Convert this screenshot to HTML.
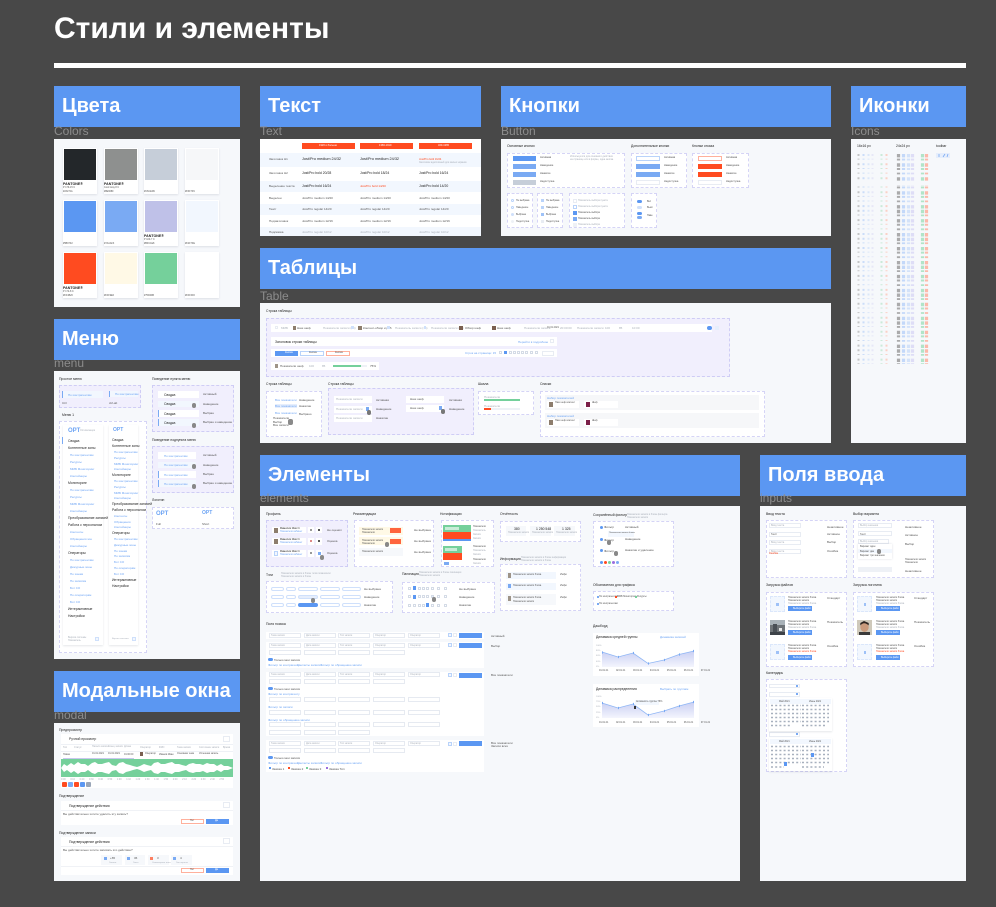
<!DOCTYPE html>
<html lang="ru"><head><meta charset="utf-8"><title>Стили и элементы</title>
<style>
*{box-sizing:border-box}
html,body{margin:0;padding:0;width:996px;height:907px;overflow:hidden;background:#484848}
body{position:relative;font-family:"Liberation Sans","Noto Sans CJK SC",sans-serif}
i,u,h1,h2,p,em,svg{position:absolute;display:block;margin:0;padding:0;font-style:normal;text-decoration:none}
#m{position:absolute;left:0;top:0;width:996px;height:907px;filter:blur(.35px)}
h1{left:54px;top:11px;font-size:30px;line-height:36px;font-weight:700;color:#fff;white-space:nowrap}
h2{height:41px;background:#5b97f2;color:#fff;font-size:20px;line-height:41px;font-weight:700;padding-left:8px;white-space:nowrap}
p{font-size:12px;line-height:14px;color:#8c8c8c;white-space:nowrap}
.pn{background:#f6f8fb}
u{font-size:3px;line-height:4px;color:#555;white-space:nowrap}
u.k{color:#222;font-size:3.4px}
u.h{color:#333;font-size:4px;line-height:5px}
u.bl{color:#6da4f4}
u.gr{color:#aab0ba}
u.rd{color:#ff4b20}
.w{background:#fff}
.lav{background:#f1effd;border:1px dashed #cfcdf5}
.dw{background:#fff;border:1px dashed #d5d4f6}
.card{background:#fff;box-shadow:0 1px 2px rgba(40,50,80,.12)}
.sw{width:32px;height:31px;left:1px;top:1px}
.bb{background:#5b97f2}.bl2{background:#7aaaf3}.gy{background:#c6ced9}.re{background:#ff4b20}
.ow{background:#fff;border:1px solid #b9d3fa}.or{background:#fff;border:1px solid #ffb09c}.op{background:#fff;border:1px solid #e8ecf3}
.tg{height:4px;border:1px solid #cfe0fb;border-radius:2px;background:#fff}
.f{height:5px;width:32px;background:#fff;border:1px solid #e6eaf1}
.pg{width:3px;height:3px;background:#fff;border:.5px solid #d4dbe6}
.nb{width:1px;background:#7aaaf3}
.pal{background:#f2f7fe}
.ph{background:#f2f7fe;border:1px dashed #dbe7fb}
</style></head><body>

<h1>Стили и элементы</h1>
<i style="left:54px;top:63px;width:912px;height:5px;background:#fff"></i>

<h2 style="left:54px;top:86px;width:186px">Цвета</h2><p style="left:54px;top:124px">Colors</p>
<h2 style="left:260px;top:86px;width:221px">Текст</h2><p style="left:260px;top:124px">Text</p>
<h2 style="left:501px;top:86px;width:330px">Кнопки</h2><p style="left:501px;top:124px">Button</p>
<h2 style="left:851px;top:86px;width:115px">Иконки</h2><p style="left:851px;top:124px">Icons</p>
<h2 style="left:260px;top:248px;width:571px">Таблицы</h2><p style="left:260px;top:289px">Table</p>
<h2 style="left:54px;top:319px;width:186px">Меню</h2><p style="left:54px;top:356px">menu</p>
<h2 style="left:260px;top:455px;width:480px">Элементы</h2><p style="left:260px;top:491px">elements</p>
<h2 style="left:760px;top:455px;width:206px">Поля ввода</h2><p style="left:760px;top:491px">inputs</p>
<h2 style="left:54px;top:671px;width:186px">Модальные окна</h2><p style="left:54px;top:708px">modal</p>

<div id="m">
<!-- ЦВЕТА -->
<i class="pn" style="left:54px;top:139px;width:186px;height:168px"></i>
<i class="card" style="left:63px;top:148px;width:34px;height:46px"><i class="sw" style="background:#23272a"></i></i>
<i class="card" style="left:104px;top:148px;width:34px;height:46px"><i class="sw" style="background:#8e908f"></i></i>
<i class="card" style="left:144px;top:148px;width:34px;height:46px"><i class="sw" style="background:#c6ced9"></i></i>
<i class="card" style="left:185px;top:148px;width:34px;height:46px"><i class="sw" style="background:#f6f7f9"></i></i>
<i class="card" style="left:63px;top:200px;width:34px;height:46px"><i class="sw" style="background:#5b97f2"></i></i>
<i class="card" style="left:104px;top:200px;width:34px;height:46px"><i class="sw" style="background:#7aaaf3"></i></i>
<i class="card" style="left:144px;top:200px;width:34px;height:46px"><i class="sw" style="background:#bfc1e8"></i></i>
<i class="card" style="left:185px;top:200px;width:34px;height:46px"><i class="sw" style="background:#f2f7fe"></i></i>
<i class="card" style="left:63px;top:252px;width:34px;height:46px"><i class="sw" style="background:#ff4b20"></i></i>
<i class="card" style="left:104px;top:252px;width:34px;height:46px"><i class="sw" style="background:#fff9e6"></i></i>
<i class="card" style="left:144px;top:252px;width:34px;height:46px"><i class="sw" style="background:#75d09b"></i></i>
<i class="card" style="left:185px;top:252px;width:34px;height:46px"><i class="sw" style="background:#fff"></i></i>
<u class="k" style="left:63px;top:182px;font-weight:700;font-size:3.6px">PANTONE®</u><u style="left:63px;top:186px;font-size:2.4px">P 179-15 C</u><u style="left:63px;top:190px;font-size:2.4px">#23272A</u>
<u class="k" style="left:104px;top:182px;font-weight:700;font-size:3.6px">PANTONE®</u><u style="left:104px;top:186px;font-size:2.4px">Cool Gray 8 C</u><u style="left:104px;top:190px;font-size:2.4px">#8E908F</u>
<u style="left:144px;top:190px;font-size:2.4px">#C6CED9</u><u style="left:185px;top:190px;font-size:2.4px">#F6F7F9</u>
<u style="left:63px;top:242px;font-size:2.4px">#5B97F2</u><u style="left:104px;top:242px;font-size:2.4px">#7AAAF3</u>
<u class="k" style="left:144px;top:234px;font-weight:700;font-size:3.6px">PANTONE®</u><u style="left:144px;top:238px;font-size:2.4px">P 100-7 C</u><u style="left:144px;top:242px;font-size:2.4px">#BFC1E8</u>
<u style="left:185px;top:242px;font-size:2.4px">#F2F7FE</u>
<u class="k" style="left:63px;top:286px;font-weight:700;font-size:3.6px">PANTONE®</u><u style="left:63px;top:290px;font-size:2.4px">P 172-8 C</u><u style="left:63px;top:294px;font-size:2.4px">#FF4B20</u>
<u style="left:104px;top:294px;font-size:2.4px">#FFF9E6</u><u style="left:144px;top:294px;font-size:2.4px">#75D09B</u><u style="left:185px;top:294px;font-size:2.4px">#FFFFFF</u>

<!-- ТЕКСТ -->
<i class="w" style="left:260px;top:139px;width:221px;height:97px"></i>
<i class="re" style="left:302px;top:143px;width:53px;height:6px"></i><i class="re" style="left:360px;top:143px;width:53px;height:6px"></i><i class="re" style="left:419px;top:143px;width:53px;height:6px"></i>
<u style="left:319px;top:144px;color:#fff;font-size:2.6px">1920 и больше</u><u style="left:379px;top:144px;color:#fff;font-size:2.6px">1366-1919</u><u style="left:438px;top:144px;color:#fff;font-size:2.6px">320-1365</u>
<i class="pal" style="left:260px;top:153px;width:221px;height:14px"></i>
<i class="pal" style="left:260px;top:181px;width:221px;height:11px"></i>
<i class="pal" style="left:260px;top:204px;width:221px;height:11px"></i>
<i class="pal" style="left:260px;top:227px;width:221px;height:9px"></i>
<u style="left:269px;top:157px">Заголовок H1</u><u class="k" style="left:302px;top:157px;font-size:3.8px">Jost/Pro medium 24/32</u><u class="k" style="left:360px;top:157px;font-size:3.8px">Jost/Pro medium 24/32</u><u class="rd" style="left:419px;top:158px;font-size:2.6px">Jost/Pro bold 16/24</u><u class="gr" style="left:419px;top:161px;font-size:2.4px">Заголовок адаптивный для малых экранов</u>
<u style="left:269px;top:171px">Заголовок H2</u><u class="k" style="left:302px;top:171px">Jost/Pro bold 20/28</u><u class="k" style="left:360px;top:171px">Jost/Pro bold 18/24</u><u class="k" style="left:419px;top:171px">Jost/Pro bold 16/24</u>
<u style="left:269px;top:184px">Выделение текста</u><u class="k" style="left:302px;top:184px">Jost/Pro bold 16/24</u><u class="rd" style="left:360px;top:184px">Jost/Pro bold 14/20</u><u class="k" style="left:419px;top:184px">Jost/Pro bold 14/20</u>
<u style="left:269px;top:196px">Выделен</u><u style="left:302px;top:196px">Jost/Pro medium 14/20</u><u style="left:360px;top:196px">Jost/Pro medium 14/20</u><u style="left:419px;top:196px">Jost/Pro medium 14/20</u>
<u style="left:269px;top:207px">Текст</u><u style="left:302px;top:207px">Jost/Pro regular 14/20</u><u style="left:360px;top:207px">Jost/Pro regular 14/20</u><u style="left:419px;top:207px">Jost/Pro regular 14/20</u>
<u style="left:269px;top:219px">Подзаголовок</u><u style="left:302px;top:219px">Jost/Pro medium 12/16</u><u style="left:360px;top:219px">Jost/Pro medium 12/16</u><u style="left:419px;top:219px">Jost/Pro medium 12/16</u>
<u style="left:269px;top:230px">Подсказка</u><u class="gr" style="left:302px;top:230px">Jost/Pro regular 10/12</u><u class="gr" style="left:360px;top:230px">Jost/Pro regular 10/12</u><u class="gr" style="left:419px;top:230px">Jost/Pro regular 10/12</u>

<!-- КНОПКИ -->
<i class="pn" style="left:501px;top:139px;width:330px;height:97px"></i>
<u class="k" style="left:507px;top:144px">Основные кнопки</u><u class="k" style="left:631px;top:144px">Дополнительные кнопки</u><u class="k" style="left:692px;top:144px">Кнопки отказа</u>
<i class="dw" style="left:507px;top:153px;width:118px;height:35px"></i>
<i class="dw" style="left:631px;top:153px;width:56px;height:35px"></i>
<i class="dw" style="left:692px;top:153px;width:57px;height:35px"></i>
<i class="bb" style="left:513px;top:156px;width:23px;height:5px"></i><i class="bl2" style="left:513px;top:164px;width:23px;height:5px"></i><i class="bl2" style="left:513px;top:172px;width:23px;height:5px"></i><i class="gy" style="left:513px;top:180px;width:23px;height:5px"></i>
<u style="left:540px;top:156px;font-size:2.6px">Активная</u><u style="left:540px;top:164px;font-size:2.6px">Наведение</u><u style="left:540px;top:172px;font-size:2.6px">Нажатие</u><u style="left:540px;top:180px;font-size:2.6px">Недоступна</u>
<u class="gr" style="left:570px;top:155px;font-size:2.4px">Используется для основного действия</u><u class="gr" style="left:570px;top:158px;font-size:2.4px">на странице или в форме, одна кнопка</u>
<i class="ow" style="left:636px;top:156px;width:24px;height:5px"></i><i class="bl2" style="left:636px;top:164px;width:24px;height:5px"></i><i class="bl2" style="left:636px;top:172px;width:24px;height:5px"></i><i class="op" style="left:636px;top:180px;width:24px;height:5px"></i>
<u style="left:664px;top:156px;font-size:2.6px">Активная</u><u style="left:664px;top:164px;font-size:2.6px">Наведение</u><u style="left:664px;top:172px;font-size:2.6px">Нажатие</u><u style="left:664px;top:180px;font-size:2.6px">Недоступна</u>
<i class="or" style="left:698px;top:156px;width:24px;height:5px"></i><i class="re" style="left:698px;top:164px;width:24px;height:5px"></i><i class="re" style="left:698px;top:172px;width:24px;height:5px"></i><i class="op" style="left:698px;top:180px;width:24px;height:5px"></i>
<u style="left:726px;top:156px;font-size:2.6px">Активная</u><u style="left:726px;top:164px;font-size:2.6px">Наведение</u><u style="left:726px;top:172px;font-size:2.6px">Нажатие</u><u style="left:726px;top:180px;font-size:2.6px">Недоступна</u>
<i class="dw" style="left:507px;top:193px;width:26px;height:35px"></i><i class="dw" style="left:537px;top:193px;width:26px;height:35px"></i><i class="dw" style="left:569px;top:193px;width:56px;height:35px"></i><i class="dw" style="left:631px;top:193px;width:26px;height:35px"></i>
<i style="left:511px;top:199px;width:3px;height:3px;border:.5px solid #b9d3fa;border-radius:50%"></i><i style="left:511px;top:206px;width:3px;height:3px;border:.5px solid #b9d3fa;border-radius:50%"></i><i style="left:511px;top:213px;width:3px;height:3px;background:#cfe0fb;border-radius:50%"></i><i style="left:511px;top:220px;width:3px;height:3px;background:#eef1f6;border-radius:50%"></i>
<u style="left:516px;top:199px;font-size:2.4px">Не выбрана</u><u style="left:516px;top:206px;font-size:2.4px">Наведение</u><u style="left:516px;top:213px;font-size:2.4px">Выбрана</u><u style="left:516px;top:220px;font-size:2.4px">Недоступна</u>
<i style="left:541px;top:199px;width:3px;height:3px;background:#b9d3fa"></i><i style="left:541px;top:206px;width:3px;height:3px;background:#b9d3fa"></i><i style="left:541px;top:213px;width:3px;height:3px;background:#9ec2f8"></i><i style="left:541px;top:220px;width:3px;height:3px;background:#e8ecf3"></i>
<u style="left:546px;top:199px;font-size:2.4px">Не выбрана</u><u style="left:546px;top:206px;font-size:2.4px">Наведение</u><u style="left:546px;top:213px;font-size:2.4px">Выбрана</u><u style="left:546px;top:220px;font-size:2.4px">Недоступна</u>
<i class="op" style="left:573px;top:199px;width:4px;height:4px"></i><i class="ow" style="left:573px;top:205px;width:4px;height:4px"></i><i class="bb" style="left:573px;top:211px;width:4px;height:4px"></i><i class="bl2" style="left:573px;top:217px;width:4px;height:4px"></i><i style="left:573px;top:223px;width:4px;height:4px;background:#eef1f6"></i>
<u class="gr" style="left:578px;top:199px;font-size:2.4px">Показатель выбора пункта</u><u class="gr" style="left:578px;top:205px;font-size:2.4px">Показатель выбора пункта</u><u style="left:578px;top:211px;font-size:2.4px">Показатель выбора</u><u style="left:578px;top:217px;font-size:2.4px">Показатель выбора</u><u class="gr" style="left:578px;top:223px;font-size:2.4px">Показатель выбора</u>
<i class="bb" style="left:637px;top:200px;width:5px;height:3px;border-radius:2px"></i><i style="left:637px;top:206px;width:5px;height:3px;border-radius:2px;background:#cfe0fb"></i><i class="bb" style="left:637px;top:212px;width:5px;height:3px;border-radius:2px"></i><i class="bl2" style="left:637px;top:216px;width:5px;height:3px;border-radius:2px"></i>
<u style="left:647px;top:200px;font-size:2.4px">Вкл</u><u style="left:647px;top:206px;font-size:2.4px">Выкл</u><u style="left:647px;top:214px;font-size:2.4px">Наве</u>

<!-- ИКОНКИ -->
<i class="pn" style="left:851px;top:139px;width:115px;height:304px"></i>
<u class="k" style="left:857px;top:144px">16x16 px</u><u class="k" style="left:896px;top:144px">24x24 px</u><u class="k" style="left:936px;top:144px">toolbar</u>
<svg style="left:0;top:0" width="996" height="907" fill="none">
<g stroke-dasharray="2 2.65 1 3.65 2 2.65 1 3.65 1 3.65 2 2.65" stroke-width="2" opacity=".55">
<path d="M858.500 154V364" stroke="#9a9a9a"/><path d="M863.500 154V364" stroke="#a9c8f8"/><path d="M868.500 154V364" stroke="#c5daf9"/><path d="M872.500 154V364" stroke="#dcdaf5"/><path d="M881.500 154V364" stroke="#a9e0bf"/><path d="M886.500 154V364" stroke="#ffb09c"/>
</g>
<g stroke-dasharray="3.4 1.25 1.8 2.85 3.4 1.25 2 2.65 1.8 2.85 3.4 1.25" stroke-width="3.2" opacity=".7">
<path d="M898.500 154V364" stroke="#8a8a8a"/><path d="M903.500 154V364" stroke="#aecbf9"/><path d="M908.500 154V364" stroke="#c5daf9"/><path d="M912.500 154V364" stroke="#d5d3f5"/><path d="M922.500 154V364" stroke="#95dcb3"/><path d="M926.500 154V364" stroke="#ff9f88"/>
</g>
<rect x="855" y="181" width="75" height="4" fill="#f6f8fb"/>
<rect x="936" y="153" width="14" height="5" fill="#e6eefc"/>
<path d="M939 154v3M943 157l2-3M947 157l1-3" stroke="#7aaaf3" stroke-width=".8"/>
</svg>

<!-- ТАБЛИЦЫ -->
<i class="pn" style="left:260px;top:303px;width:571px;height:140px"></i>
<u class="k" style="left:266px;top:309px">Строка таблицы</u>
<i class="lav" style="left:266px;top:318px;width:464px;height:59px"></i>
<i class="w" style="left:271px;top:324px;width:441px;height:8px"></i>
<i class="w" style="left:271px;top:337px;width:286px;height:9px"></i>
<i class="w" style="left:271px;top:349px;width:286px;height:8px"></i>
<i class="w" style="left:271px;top:362px;width:108px;height:8px"></i>
<i class="op" style="left:275px;top:326px;width:3px;height:3px"></i><u class="gr" style="left:281px;top:326px">ММБ</u>
<i style="left:293px;top:326px;width:3px;height:4px;background:#8d7d6d"></i><u style="left:297px;top:326px">Наш шеф</u>
<u class="gr" style="left:323px;top:326px">Показатели записи (15)</u><i style="left:351px;top:326px;width:3px;height:3px;background:#cfe0fb"></i>
<i style="left:358px;top:326px;width:4px;height:4px;background:#8d7d6d"></i><u style="left:363px;top:326px">Контент-обзор и раб</u><i style="left:387px;top:326px;width:3px;height:3px;background:#cfe0fb"></i>
<u class="gr" style="left:395px;top:326px">Показатель записи (15)</u><i style="left:424px;top:326px;width:2px;height:3px;background:#cfe0fb"></i>
<u class="gr" style="left:431px;top:326px">Показатели записи (15)</u>
<i style="left:459px;top:326px;width:4px;height:4px;background:#7a5f50"></i><u style="left:465px;top:326px">Обзор шеф</u>
<i style="left:492px;top:326px;width:4px;height:4px;background:#7a5f50"></i><u style="left:497px;top:326px">Наш шеф</u>
<u class="gr" style="left:524px;top:326px">Показатели запись</u>
<u style="left:547px;top:326px;font-size:2.4px">01.01.2021</u><u class="gr" style="left:560px;top:326px">20:00:00</u><u class="gr" style="left:577px;top:326px">Показатели записи</u><u class="gr" style="left:605px;top:326px">100</u><u class="gr" style="left:619px;top:326px">85</u><u class="gr" style="left:632px;top:326px">10:00</u>
<i class="bb" style="left:707px;top:326px;width:5px;height:4px;border-radius:2px"></i><i style="left:715px;top:326px;width:4px;height:4px;background:#e6eefc"></i>
<u class="k" style="left:275px;top:340px">Заголовок строки таблицы</u><u class="bl" style="left:518px;top:340px">Перейти в подробное</u><i class="op" style="left:550px;top:339px;width:4px;height:4px"></i>
<i class="bb" style="left:275px;top:351px;width:23px;height:5px"></i><i class="ow" style="left:300px;top:351px;width:24px;height:5px"></i><i class="or" style="left:326px;top:351px;width:24px;height:5px"></i>
<u style="left:285px;top:351px;color:#fff;font-size:2.4px">Кнопка</u><u style="left:309px;top:351px;font-size:2.4px">Кнопка</u><u style="left:335px;top:351px;font-size:2.4px">Кнопка</u>
<u class="bl" style="left:465px;top:351px">Строк на странице: 15</u>
<i class="pg" style="left:499px;top:351px"></i><i class="bb" style="left:504px;top:351px;width:3px;height:3px"></i><i class="pg" style="left:509px;top:351px"></i><i class="pg" style="left:513px;top:351px"></i><i class="pg" style="left:517px;top:351px"></i><i class="pg" style="left:521px;top:351px"></i><i class="pg" style="left:525px;top:351px"></i><i class="pg" style="left:530px;top:351px"></i><i class="pg" style="left:535px;top:351px"></i>
<i class="op" style="left:542px;top:351px;width:12px;height:5px"></i>
<i style="left:275px;top:364px;width:3px;height:4px;background:#9e9488"></i><u style="left:280px;top:364px">Показатели шеф</u><u class="gr" style="left:309px;top:364px">100</u><u class="gr" style="left:322px;top:364px">85</u>
<i style="left:333px;top:365px;width:34px;height:2px;background:#eef1f6"></i><i style="left:333px;top:365px;width:28px;height:2px;background:#75d09b"></i><u style="left:370px;top:364px">75%</u>
<u class="k" style="left:266px;top:382px">Строка таблицы</u><u class="k" style="left:328px;top:382px">Строка таблицы</u><u class="k" style="left:478px;top:382px">Шкала</u><u class="k" style="left:540px;top:382px">Списки</u>
<i class="dw" style="left:266px;top:391px;width:56px;height:46px"></i>
<u class="bl" style="left:275px;top:398px">Все показатели</u><u class="bl" style="left:275px;top:404px;background:#e6eefc">Все показатели</u><u class="bl" style="left:275px;top:411px">Все показатели</u>
<u style="left:299px;top:398px">Наведение</u><u style="left:299px;top:404px">Нажатие</u><u style="left:299px;top:412px">Выбрано</u>
<u style="left:273px;top:416px">Показатели</u><u style="left:273px;top:420px">Выбор</u><u style="left:273px;top:423px">Все записи</u>
<i style="left:288px;top:419px;width:5px;height:6px;background:#8a8a8a;border-radius:2px"></i>
<i class="lav" style="left:328px;top:388px;width:146px;height:47px"></i>
<i class="w" style="left:334px;top:396px;width:38px;height:7px"></i><i class="w" style="left:334px;top:406px;width:38px;height:7px"></i><i class="w" style="left:334px;top:415px;width:38px;height:7px"></i>
<i class="w" style="left:406px;top:396px;width:38px;height:7px"></i><i class="w" style="left:406px;top:405px;width:38px;height:7px"></i>
<u class="gr" style="left:336px;top:397px">Показатели записи</u><u class="gr" style="left:336px;top:407px">Показатели записи</u><u class="gr" style="left:336px;top:416px">Показатели записи</u>
<u style="left:410px;top:397px">Наш шеф</u><u style="left:410px;top:406px">Наш шеф</u>
<i class="bl2" style="left:366px;top:407px;width:3px;height:4px"></i><i class="bl2" style="left:439px;top:406px;width:3px;height:4px"></i>
<i style="left:367px;top:410px;width:4px;height:5px;background:#777;border-radius:2px"></i><i style="left:441px;top:409px;width:4px;height:5px;background:#777;border-radius:2px"></i>
<u style="left:376px;top:398px">Активная</u><u style="left:376px;top:407px">Наведение</u><u style="left:376px;top:416px">Нажатие</u><u style="left:449px;top:398px">Активная</u><u style="left:449px;top:407px">Наведение</u>
<i class="dw" style="left:478px;top:391px;width:56px;height:24px"></i>
<i style="left:484px;top:399px;width:36px;height:2px;background:#75d09b"></i><i style="left:484px;top:408px;width:36px;height:2px;background:#eef1f6"></i><i class="re" style="left:484px;top:408px;width:7px;height:2px"></i>
<u class="gr" style="left:484px;top:395px">Показатели</u><u class="gr" style="left:484px;top:404px">Показатели</u>
<i class="dw" style="left:540px;top:391px;width:225px;height:46px"></i>
<i style="left:545px;top:395px;width:214px;height:15px;background:#f6f7f9"></i><i style="left:545px;top:413px;width:214px;height:15px;background:#f6f7f9"></i>
<u class="bl" style="left:547px;top:396px">Набор показателей</u><u class="bl" style="left:547px;top:414px">Набор показателей</u>
<i class="w" style="left:547px;top:401px;width:32px;height:7px"></i><i class="w" style="left:584px;top:401px;width:34px;height:7px"></i><i class="w" style="left:547px;top:419px;width:32px;height:7px"></i><i class="w" style="left:584px;top:419px;width:34px;height:7px"></i>
<i style="left:549px;top:402px;width:4px;height:5px;background:#8d7d6d"></i><i style="left:586px;top:402px;width:4px;height:5px;background:#7a1f48"></i><i style="left:549px;top:420px;width:4px;height:5px;background:#8d7d6d"></i><i style="left:586px;top:420px;width:4px;height:5px;background:#7a1f48"></i>
<u style="left:555px;top:401px;font-size:2.4px">Наш шеф контент</u><u style="left:592px;top:401px;font-size:2.4px">Шеф</u><u style="left:555px;top:419px;font-size:2.4px">Наш шеф контент</u><u style="left:592px;top:419px;font-size:2.4px">Шеф</u>

<!-- МЕНЮ -->
<i class="pn" style="left:54px;top:371px;width:186px;height:288px"></i>
<u class="k" style="left:59px;top:377px">Простое меню</u><u class="k" style="left:152px;top:377px">Поведение пункта меню</u>
<i class="lav" style="left:59px;top:385px;width:82px;height:23px"></i>
<i class="pal" style="left:62px;top:391px;width:41px;height:7px"></i><i class="nb" style="left:62px;top:391px;height:7px"></i><u class="bl" style="left:68px;top:393px">По контрагентам</u>
<i class="pal" style="left:109px;top:391px;width:29px;height:6px"></i><i class="nb" style="left:109px;top:391px;height:6px"></i><u class="bl" style="left:115px;top:392px">По контрагентам</u>
<u style="left:62px;top:401px">Ctrl</u><u style="left:109px;top:401px">ctrl-alt</u>
<u class="k" style="left:62px;top:413px">Меню 1</u>
<i class="dw" style="left:59px;top:421px;width:88px;height:232px"></i>
<i class="card" style="left:63px;top:425px;width:40px;height:220px"></i><i class="card" style="left:109px;top:425px;width:29px;height:220px"></i>
<u class="bl" style="left:68px;top:428px;font-size:6px;line-height:7px;font-weight:700">OPT</u><u class="gr" style="left:80px;top:429px;font-size:2.4px">Оптимизация</u>
<u class="bl" style="left:113px;top:427px;font-size:5px;line-height:6px;font-weight:700">OPT</u>
<i style="left:62px;top:437px;width:1px;height:7px;background:#7aaaf3"></i>
<u class="k" style="left:68px;top:439px">Сводка</u><u class="k" style="left:68px;top:446px">Контентные зоны</u>
<u class="bl" style="left:70px;top:453px">По контрагентам</u><u class="bl" style="left:70px;top:460px">Ресурсы</u><u class="bl" style="left:70px;top:467px">ММБ Мониторинг</u><u class="bl" style="left:70px;top:474px">Контейнеры</u>
<u class="k" style="left:68px;top:481px">Мониторинг</u>
<u class="bl" style="left:70px;top:488px">По контрагентам</u><u class="bl" style="left:70px;top:495px">Ресурсы</u><u class="bl" style="left:70px;top:502px">ММБ Мониторинг</u><u class="bl" style="left:70px;top:509px">Контейнеры</u>
<u class="k" style="left:68px;top:516px">Преобразование записей</u><u class="k" style="left:68px;top:523px">Работа с персоналом</u>
<u class="bl" style="left:70px;top:530px">Контенты</u><u class="bl" style="left:70px;top:537px">Обращения зон</u><u class="bl" style="left:70px;top:544px">Контейнеры</u>
<u class="k" style="left:68px;top:551px">Операторы</u>
<u class="bl" style="left:70px;top:558px">По контрагентам</u><u class="bl" style="left:70px;top:565px">Дежурные зоны</u><u class="bl" style="left:70px;top:572px">По зонам</u><u class="bl" style="left:70px;top:579px">По записям</u><u class="bl" style="left:70px;top:586px">Бот СО</u><u class="bl" style="left:70px;top:593px">По операторам</u><u class="bl" style="left:70px;top:600px">Бот СО</u>
<u class="k" style="left:68px;top:607px">Интерактивные</u><u class="k" style="left:68px;top:614px">Настройки</u>
<u class="gr" style="left:68px;top:636px;font-size:2.4px">Версия системы</u><u class="gr" style="left:68px;top:639px;font-size:2.4px">Показатель</u><i class="pal" style="left:95px;top:637px;width:4px;height:4px;border:.5px solid #cfe0fb"></i>
<u class="k" style="left:112px;top:438px">Сводка</u><u class="k" style="left:112px;top:444px">Контентные зоны</u>
<u class="bl" style="left:114px;top:450px">По контрагентам</u><u class="bl" style="left:114px;top:456px">Ресурсы</u><u class="bl" style="left:114px;top:462px">ММБ Мониторинг</u><u class="bl" style="left:114px;top:467px">Контейнеры</u>
<u class="k" style="left:112px;top:473px">Мониторинг</u>
<u class="bl" style="left:114px;top:479px">По контрагентам</u><u class="bl" style="left:114px;top:485px">Ресурсы</u><u class="bl" style="left:114px;top:491px">ММБ Мониторинг</u><u class="bl" style="left:114px;top:496px">Контейнеры</u>
<u class="k" style="left:112px;top:502px">Преобразование записей</u><u class="k" style="left:112px;top:508px">Работа с персоналом</u>
<u class="bl" style="left:114px;top:514px">Контенты</u><u class="bl" style="left:114px;top:520px">Обращения</u><u class="bl" style="left:114px;top:525px">Контейнеры</u>
<u class="k" style="left:112px;top:531px">Операторы</u>
<u class="bl" style="left:114px;top:537px">По контрагентам</u><u class="bl" style="left:114px;top:543px">Дежурные зоны</u><u class="bl" style="left:114px;top:549px">По зонам</u><u class="bl" style="left:114px;top:554px">По записям</u><u class="bl" style="left:114px;top:560px">Бот СО</u><u class="bl" style="left:114px;top:566px">По операторам</u><u class="bl" style="left:114px;top:572px">Бот СО</u>
<u class="k" style="left:112px;top:578px">Интерактивные</u><u class="k" style="left:112px;top:584px">Настройки</u>
<u class="gr" style="left:112px;top:637px;font-size:2.2px">Версия системы</u><i class="pal" style="left:132px;top:637px;width:4px;height:4px;border:.5px solid #cfe0fb"></i>
<i class="lav" style="left:152px;top:385px;width:82px;height:47px"></i>
<i class="w" style="left:158px;top:391px;width:41px;height:7px"></i><i class="pal" style="left:158px;top:401px;width:41px;height:6px"></i><i class="w" style="left:158px;top:410px;width:41px;height:7px"></i><i class="pal" style="left:158px;top:419px;width:41px;height:7px"></i>
<i class="nb" style="left:158px;top:410px;height:7px"></i><i class="nb" style="left:158px;top:419px;height:7px"></i>
<u class="k" style="left:164px;top:393px">Сводка</u><u class="k" style="left:164px;top:402px">Сводка</u><u class="k" style="left:164px;top:412px">Сводка</u><u class="k" style="left:164px;top:421px">Сводка</u>
<i style="left:192px;top:403px;width:4px;height:5px;background:#888;border-radius:2px"></i><i style="left:192px;top:423px;width:4px;height:5px;background:#888;border-radius:2px"></i>
<u style="left:203px;top:392px">Активный</u><u style="left:203px;top:402px">Наведение</u><u style="left:203px;top:411px">Выбран</u><u style="left:203px;top:420px">Выбран и наведение</u>
<u class="k" style="left:152px;top:438px">Поведение подпункта меню</u>
<i class="lav" style="left:152px;top:446px;width:82px;height:47px"></i>
<i class="w" style="left:158px;top:452px;width:38px;height:7px"></i><i class="pal" style="left:158px;top:462px;width:38px;height:6px"></i><i class="w" style="left:158px;top:471px;width:38px;height:7px"></i><i class="pal" style="left:158px;top:480px;width:38px;height:7px"></i>
<i class="nb" style="left:158px;top:471px;height:7px"></i><i class="nb" style="left:158px;top:480px;height:7px"></i>
<u class="bl" style="left:164px;top:454px">По контрагентам</u><u class="bl" style="left:164px;top:463px">По контрагентам</u><u class="bl" style="left:164px;top:473px">По контрагентам</u><u class="bl" style="left:164px;top:482px">По контрагентам</u>
<i style="left:192px;top:464px;width:4px;height:5px;background:#888;border-radius:2px"></i><i style="left:192px;top:484px;width:4px;height:5px;background:#888;border-radius:2px"></i>
<u style="left:203px;top:453px">Активный</u><u style="left:203px;top:463px">Наведение</u><u style="left:203px;top:472px">Выбран</u><u style="left:203px;top:481px">Выбран и наведение</u>
<u class="k" style="left:152px;top:498px">Логотип</u>
<i class="dw" style="left:152px;top:507px;width:82px;height:22px"></i>
<u class="bl" style="left:156px;top:510px;font-size:6px;line-height:8px;font-weight:700">OPT</u><u class="bl" style="left:202px;top:510px;font-size:5px;line-height:6px;font-weight:700">OPT</u>
<u style="left:156px;top:522px">Full</u><u style="left:202px;top:522px">Short</u>

<!-- МОДАЛЬНЫЕ -->
<i class="pn" style="left:54px;top:723px;width:186px;height:158px"></i>
<u class="k" style="left:59px;top:728px">Предпросмотр</u>
<i class="w" style="left:61px;top:734px;width:172px;height:54px"></i>
<u class="k" style="left:69px;top:737px">Ручной просмотр</u><i class="op" style="left:223px;top:736px;width:7px;height:6px"></i>
<i style="left:61px;top:744px;width:172px;height:1px;background:#eef1f6"></i><i style="left:61px;top:751px;width:172px;height:1px;background:#eef1f6"></i>
<u class="gr" style="left:63px;top:746px;font-size:2.4px">Тип</u><u class="gr" style="left:74px;top:746px;font-size:2.4px">Статус</u><u class="gr" style="left:92px;top:745px;font-size:2.4px">Начало записи</u><u class="gr" style="left:108px;top:745px;font-size:2.4px">Конец записи</u><u class="gr" style="left:124px;top:745px;font-size:2.4px">Длина</u><u class="gr" style="left:140px;top:746px;font-size:2.4px">Оператор</u><u class="gr" style="left:159px;top:746px;font-size:2.4px">ФИО</u><u class="gr" style="left:177px;top:746px;font-size:2.4px">Тема записи</u><u class="gr" style="left:199px;top:746px;font-size:2.4px">Состояние записи</u><u class="gr" style="left:223px;top:746px;font-size:2.4px">Время</u>
<u style="left:63px;top:753px;font-size:2.4px">Новая</u><u style="left:92px;top:752px;font-size:2.4px">01.01.2021</u><u style="left:108px;top:752px;font-size:2.4px">01.01.2021</u><u style="left:124px;top:753px;font-size:2.4px">01:00:00</u><i style="left:140px;top:752px;width:3px;height:4px;background:#7a5f50"></i><u style="left:145px;top:752px;font-size:2.4px">Оператор</u><u style="left:159px;top:753px;font-size:2.4px">Иванов Иван</u><u style="left:177px;top:752px;font-size:2.4px">Основная тема</u><u style="left:199px;top:752px;font-size:2.4px">Успешная запись</u>
<i style="left:63px;top:758px;width:71px;height:1px;background:#c9c6ee"></i>
<svg style="left:61px;top:759px" width="172" height="18"><rect width="172" height="18" fill="#75d09b"/><path fill="#fff" d="M0 9 3 5 6 7 10 4 13 6 17 3 20 5 24 5 27 7 31 4 34 3 37 5 41 5 44 4 48 3 51 6 55 7 58 4 62 3 65 5 69 6 72 7 76 8 79 7 83 5 86 6 90 7 93 4 97 3 100 5 104 5 107 4 111 3 114 5 118 5 121 6 125 7 128 5 132 4 135 5 139 5 142 6 146 4 149 5 153 5 156 7 160 5 163 7 167 7 172 9 167 11 163 11 160 13 156 11 153 13 149 13 146 14 142 12 139 13 135 13 132 14 128 13 125 11 121 12 118 13 114 13 111 15 107 14 104 13 100 13 97 15 93 14 90 11 86 12 83 13 79 11 76 10 72 11 69 12 65 13 62 15 58 14 55 11 51 12 48 15 44 14 41 13 37 13 34 15 31 14 27 11 24 13 20 13 17 15 13 12 10 14 6 11 3 13Z"/></svg>
<u class="gr" style="left:61px;top:778px;font-size:2.4px;word-spacing:4px">0:00 0:10 0:20 0:30 0:40 0:50 1:00 1:10 1:20 1:30 1:40 1:50 2:00 2:10 2:20 2:30 2:40 2:50</u>
<i class="re" style="left:62px;top:782px;width:5px;height:5px;border-radius:1px"></i><i class="bl2" style="left:68px;top:782px;width:5px;height:5px;border-radius:1px"></i><i class="re" style="left:74px;top:782px;width:5px;height:5px;border-radius:1px"></i><i class="bb" style="left:80px;top:782px;width:5px;height:5px;border-radius:1px"></i><i style="left:86px;top:782px;width:5px;height:5px;border-radius:1px;background:#9aa6b8"></i>
<u class="k" style="left:59px;top:794px">Подтверждение</u>
<i class="w" style="left:61px;top:801px;width:172px;height:24px"></i><i style="left:61px;top:810px;width:172px;height:1px;background:#f0f2f6"></i>
<u class="k" style="left:69px;top:804px">Подтверждение действия</u><i class="op" style="left:223px;top:802px;width:7px;height:6px"></i>
<u style="left:63px;top:812px">Вы действительно хотите удалить эту запись?</u>
<i class="or" style="left:181px;top:819px;width:23px;height:5px"></i><i class="bb" style="left:206px;top:819px;width:23px;height:5px"></i>
<u style="left:190px;top:819px;font-size:2.4px">Нет</u><u style="left:215px;top:819px;font-size:2.4px;color:#fff">Да</u>
<u class="k" style="left:59px;top:831px">Подтверждение записи</u>
<i class="w" style="left:61px;top:837px;width:172px;height:38px"></i><i style="left:61px;top:846px;width:172px;height:1px;background:#f0f2f6"></i><i style="left:61px;top:866px;width:172px;height:1px;background:#f0f2f6"></i>
<u class="k" style="left:69px;top:840px">Подтверждение действия</u><i class="op" style="left:223px;top:838px;width:7px;height:6px"></i>
<u style="left:63px;top:848px">Вы действительно хотите записать это действие?</u>
<i style="left:101px;top:855px;width:21px;height:10px;background:#f6f8fb"></i><i style="left:125px;top:855px;width:20px;height:10px;background:#f6f8fb"></i><i style="left:148px;top:855px;width:21px;height:10px;background:#f6f8fb"></i><i style="left:171px;top:855px;width:21px;height:10px;background:#f6f8fb"></i>
<i class="bl2" style="left:104px;top:857px;width:3px;height:3px"></i><i class="bl2" style="left:127px;top:857px;width:3px;height:3px"></i><i class="re" style="left:150px;top:857px;width:3px;height:3px;opacity:.7"></i><i class="bl2" style="left:173px;top:857px;width:3px;height:3px"></i>
<u style="left:110px;top:856px">+65</u><u style="left:134px;top:856px">36</u><u style="left:157px;top:856px">3</u><u style="left:180px;top:856px">4</u>
<u class="gr" style="left:109px;top:861px;font-size:2.2px">Записи</u><u class="gr" style="left:133px;top:861px;font-size:2.2px">Зоны</u><u class="gr" style="left:152px;top:861px;font-size:2.2px">Оповещение зоны</u><u class="gr" style="left:176px;top:861px;font-size:2.2px">Зон охраны</u>
<i class="or" style="left:181px;top:868px;width:23px;height:5px"></i><i class="bb" style="left:206px;top:868px;width:23px;height:5px"></i>
<u style="left:190px;top:868px;font-size:2.4px">Нет</u><u style="left:215px;top:868px;font-size:2.4px;color:#fff">Да</u>

<!-- ЭЛЕМЕНТЫ -->
<i class="pn" style="left:260px;top:506px;width:480px;height:375px"></i>
<u class="k" style="left:266px;top:512px">Профиль</u><u class="k" style="left:353px;top:512px">Рекомендации</u><u class="k" style="left:440px;top:512px">Нотификации</u><u class="k" style="left:500px;top:512px">Отчётность</u>
<i class="lav" style="left:266px;top:520px;width:82px;height:47px"></i>
<i class="w" style="left:272px;top:527px;width:34px;height:6px"></i><i class="w" style="left:272px;top:538px;width:34px;height:7px"></i><i class="w" style="left:272px;top:550px;width:34px;height:7px"></i>
<i style="left:274px;top:528px;width:4px;height:5px;background:#8d7d6d"></i><i style="left:274px;top:539px;width:4px;height:5px;background:#8d7d6d"></i><i class="pal" style="left:274px;top:551px;width:4px;height:5px;border:.5px solid #b9d3fa"></i>
<u class="k" style="left:280px;top:527px;font-size:2.6px">Фамилия Имя О.</u><u class="bl" style="left:280px;top:530px;font-size:2.4px">Показатели кабинет</u>
<u class="k" style="left:280px;top:538px;font-size:2.6px">Фамилия Имя О.</u><u class="bl" style="left:280px;top:541px;font-size:2.4px">Показатели кабинет</u>
<u class="k" style="left:280px;top:550px;font-size:2.6px">Фамилия Имя О.</u><u class="bl" style="left:280px;top:553px;font-size:2.4px">Показатели кабинет</u>
<i class="w" style="left:308px;top:527px;width:6px;height:6px"></i><i class="w" style="left:316px;top:527px;width:6px;height:6px"></i><i class="w" style="left:308px;top:538px;width:6px;height:7px"></i><i class="w" style="left:316px;top:538px;width:6px;height:7px"></i><i class="w" style="left:308px;top:550px;width:6px;height:7px"></i><i class="w" style="left:316px;top:550px;width:6px;height:7px"></i>
<i style="left:310px;top:529px;width:2px;height:2px;background:#999"></i><i style="left:318px;top:529px;width:2px;height:2px;background:#555"></i><i style="left:310px;top:540px;width:2px;height:2px;background:#d88"></i><i style="left:318px;top:540px;width:2px;height:2px;background:#555"></i><i style="left:310px;top:552px;width:2px;height:2px;background:#999"></i><i class="bl2" style="left:318px;top:552px;width:3px;height:3px"></i>
<i style="left:320px;top:555px;width:4px;height:5px;background:#888;border-radius:2px"></i>
<u style="left:327px;top:528px">Не оценил</u><u style="left:327px;top:539px">Оценка</u><u style="left:327px;top:551px">Оценка</u>
<i class="dw" style="left:354px;top:520px;width:80px;height:47px"></i>
<i style="left:359px;top:527px;width:44px;height:8px;background:#fff9e6"></i><i style="left:359px;top:537px;width:44px;height:8px;background:#fff9e6"></i><i style="left:359px;top:548px;width:44px;height:8px;background:#f6f8fb"></i>
<i class="re" style="left:390px;top:528px;width:11px;height:5px;opacity:.85"></i><i class="re" style="left:390px;top:539px;width:11px;height:5px;opacity:.85"></i>
<u style="left:362px;top:528px;font-size:2.4px">Показатели записи</u><u style="left:362px;top:531px;font-size:2.4px">Показатели</u><u style="left:362px;top:539px;font-size:2.4px">Показатели записи</u><u style="left:362px;top:542px;font-size:2.4px">Показатели</u><u style="left:362px;top:550px;font-size:2.4px">Показатели записи</u>
<u style="left:414px;top:528px">Не выбрана</u><u style="left:414px;top:539px">Не выбрана</u><u style="left:414px;top:550px">Не выбрана</u>
<i style="left:385px;top:542px;width:4px;height:5px;background:#888;border-radius:2px"></i>
<i class="dw" style="left:441px;top:520px;width:53px;height:47px"></i>
<i style="left:443px;top:525px;width:28px;height:7px;background:#75d09b"></i><i class="re" style="left:443px;top:532px;width:28px;height:7px"></i><i class="bb" style="left:443px;top:539px;width:28px;height:2px"></i>
<i style="left:443px;top:546px;width:19px;height:7px;background:#75d09b"></i><i class="re" style="left:443px;top:553px;width:19px;height:7px"></i><i class="bl2" style="left:444px;top:562px;width:5px;height:3px"></i>
<i class="w" style="left:445px;top:527px;width:14px;height:3px;opacity:.6"></i><i class="w" style="left:445px;top:548px;width:12px;height:3px;opacity:.6"></i>
<u style="left:473px;top:525px;font-size:2.4px">Показатели</u><u class="gr" style="left:473px;top:529px;font-size:2.4px">Показатель</u><u class="gr" style="left:473px;top:533px;font-size:2.4px">Записи</u><u class="gr" style="left:473px;top:537px;font-size:2.4px">Записи</u>
<u style="left:473px;top:545px;font-size:2.4px">Показатели</u><u class="gr" style="left:473px;top:549px;font-size:2.4px">Показатель</u><u class="gr" style="left:473px;top:553px;font-size:2.4px">Записи</u><u style="left:473px;top:558px;font-size:2.4px">Показатели</u><u class="gr" style="left:473px;top:562px;font-size:2.4px">Записи</u>
<i class="dw" style="left:500px;top:521px;width:81px;height:21px"></i>
<i style="left:506px;top:526px;width:20px;height:10px;background:#f6f8fb"></i><i style="left:530px;top:526px;width:21px;height:10px;background:#f6f8fb"></i><i style="left:554px;top:526px;width:21px;height:10px;background:#f6f8fb"></i>
<u class="k" style="left:514px;top:527px">380</u><u class="k" style="left:536px;top:527px">1 250 548</u><u class="k" style="left:562px;top:527px">1 325</u>
<u class="gr" style="left:508px;top:531px;font-size:2.4px">Показатели записи</u><u class="gr" style="left:532px;top:531px;font-size:2.4px">Показатели записи</u><u class="gr" style="left:556px;top:531px;font-size:2.4px">Показатели записи</u>
<u class="k" style="left:500px;top:557px">Информация</u><u class="gr" style="left:521px;top:556px;font-size:2.4px">Показатели записи в блоке информации</u><u class="gr" style="left:521px;top:559px;font-size:2.4px">Показатели записи в блоке</u>
<i class="dw" style="left:500px;top:564px;width:81px;height:47px"></i>
<i class="pal" style="left:506px;top:572px;width:50px;height:7px"></i><i class="pal" style="left:506px;top:583px;width:50px;height:7px"></i><i style="left:506px;top:594px;width:50px;height:11px;background:#f6f8fb"></i>
<i style="left:508px;top:573px;width:3px;height:5px;background:#9e9488"></i><i class="bl2" style="left:508px;top:584px;width:3px;height:4px"></i><i style="left:508px;top:596px;width:3px;height:5px;background:#9e9488"></i>
<u style="left:513px;top:573px;font-size:2.4px">Показатели записи блока</u><u style="left:513px;top:584px;font-size:2.4px">Показатели записи блока</u><u style="left:513px;top:596px;font-size:2.4px">Показатели записи блока</u><u style="left:513px;top:600px;font-size:2.4px">Показатели записи</u>
<u style="left:560px;top:573px;font-size:2.6px">Инфо</u><u style="left:560px;top:584px;font-size:2.6px">Инфо</u><u style="left:560px;top:596px;font-size:2.6px">Инфо</u>
<u class="k" style="left:266px;top:573px">Тэги</u><u class="gr" style="left:281px;top:572px;font-size:2.4px">Показатели записи в блоке тэгов показатели</u><u class="gr" style="left:281px;top:575px;font-size:2.4px">Показатели записи в блоке</u>
<i class="dw" style="left:266px;top:581px;width:127px;height:32px"></i>
<i class="tg" style="left:271px;top:587px;width:13px"></i><i class="tg" style="left:286px;top:587px;width:10px"></i><i class="tg" style="left:298px;top:587px;width:20px"></i><i class="tg" style="left:320px;top:587px;width:20px"></i><i class="tg" style="left:342px;top:587px;width:19px"></i>
<i class="tg" style="left:271px;top:595px;width:13px"></i><i class="tg" style="left:286px;top:595px;width:10px"></i><i class="tg" style="left:298px;top:595px;width:20px;background:#e6eefc"></i><i class="tg" style="left:320px;top:595px;width:20px"></i><i class="tg" style="left:342px;top:595px;width:19px"></i>
<i class="tg" style="left:271px;top:603px;width:13px"></i><i class="tg" style="left:286px;top:603px;width:10px"></i><i class="tg" style="left:298px;top:603px;width:20px;background:#5b97f2;border-color:#5b97f2"></i><i class="tg" style="left:320px;top:603px;width:20px"></i><i class="tg" style="left:342px;top:603px;width:19px"></i>
<u style="left:364px;top:587px">Не выбрана</u><u style="left:364px;top:595px">Наведение</u><u style="left:364px;top:603px">Нажатие</u>
<i style="left:311px;top:598px;width:4px;height:5px;background:#888;border-radius:2px"></i>
<u class="k" style="left:402px;top:572px">Пагинация</u><u class="gr" style="left:419px;top:571px;font-size:2.4px">Показатели записи в блоке пагинация</u><u class="gr" style="left:419px;top:574px;font-size:2.4px">Показатели записи</u>
<i class="dw" style="left:402px;top:582px;width:93px;height:31px"></i>
<i class="pg" style="left:408px;top:587px"></i><i class="bb" style="left:413px;top:586px;width:3px;height:4px"></i><i class="pg" style="left:418px;top:587px"></i><i class="pg" style="left:422px;top:587px"></i><i class="pg" style="left:426px;top:587px"></i><i class="pg" style="left:431px;top:587px"></i><i class="pg" style="left:437px;top:587px"></i><i class="pg" style="left:444px;top:587px"></i>
<i class="pg" style="left:408px;top:595px"></i><i class="bb" style="left:413px;top:595px;width:3px;height:4px"></i><i class="pg" style="left:418px;top:595px"></i><i class="pg" style="left:422px;top:595px"></i><i class="pg" style="left:426px;top:595px"></i><i class="pg" style="left:431px;top:595px;background:#e6eefc"></i><i class="pg" style="left:437px;top:595px"></i><i class="pg" style="left:444px;top:595px"></i>
<i class="pg" style="left:408px;top:604px"></i><i class="pg" style="left:413px;top:604px"></i><i class="pg" style="left:418px;top:604px"></i><i class="pg" style="left:422px;top:604px"></i><i class="bb" style="left:426px;top:603px;width:3px;height:4px"></i><i class="pg" style="left:431px;top:604px"></i><i class="pg" style="left:437px;top:604px"></i><i class="pg" style="left:444px;top:604px"></i>
<i style="left:432px;top:597px;width:4px;height:5px;background:#888;border-radius:2px"></i>
<u style="left:459px;top:587px">Не выбрана</u><u style="left:459px;top:595px">Наведение</u><u style="left:459px;top:603px">Нажатие</u>
<u class="k" style="left:266px;top:622px">Поля поиска</u>
<i class="w" style="left:266px;top:632px;width:218px;height:7px"></i><i class="w" style="left:266px;top:642px;width:218px;height:26px"></i><i class="w" style="left:266px;top:672px;width:218px;height:64px"></i><i class="w" style="left:266px;top:740px;width:218px;height:32px"></i>
<i class="f" style="left:269px;top:633px"></i><i class="f" style="left:304px;top:633px"></i><i class="f" style="left:338px;top:633px"></i><i class="f" style="left:373px;top:633px"></i><i class="f" style="left:408px;top:633px"></i>
<i class="f" style="left:269px;top:643px"></i><i class="f" style="left:304px;top:643px"></i><i class="f" style="left:338px;top:643px"></i><i class="f" style="left:373px;top:643px"></i><i class="f" style="left:408px;top:643px"></i>
<i class="f" style="left:269px;top:650px"></i><i class="f" style="left:304px;top:650px"></i><i class="f" style="left:338px;top:650px"></i><i class="f" style="left:373px;top:650px"></i>
<i class="f" style="left:269px;top:672px"></i><i class="f" style="left:304px;top:672px"></i><i class="f" style="left:338px;top:672px"></i><i class="f" style="left:373px;top:672px"></i><i class="f" style="left:408px;top:672px"></i>
<i class="f" style="left:269px;top:679px"></i><i class="f" style="left:304px;top:679px"></i><i class="f" style="left:338px;top:679px"></i><i class="f" style="left:373px;top:679px"></i>
<i class="f" style="left:269px;top:697px"></i><i class="f" style="left:304px;top:697px"></i><i class="f" style="left:338px;top:697px"></i><i class="f" style="left:373px;top:697px"></i><i class="f" style="left:408px;top:697px"></i>
<i class="f" style="left:269px;top:710px"></i><i class="f" style="left:304px;top:710px"></i><i class="f" style="left:338px;top:710px"></i><i class="f" style="left:373px;top:710px"></i><i class="f" style="left:408px;top:710px"></i>
<i class="f" style="left:269px;top:722px"></i><i class="f" style="left:304px;top:722px"></i><i class="f" style="left:338px;top:722px"></i><i class="f" style="left:373px;top:722px"></i><i class="f" style="left:408px;top:722px"></i>
<i class="f" style="left:269px;top:730px"></i><i class="f" style="left:304px;top:730px"></i><i class="f" style="left:338px;top:730px"></i>
<i class="f" style="left:269px;top:741px"></i><i class="f" style="left:304px;top:741px"></i><i class="f" style="left:338px;top:741px"></i><i class="f" style="left:373px;top:741px"></i><i class="f" style="left:408px;top:741px"></i>
<i class="f" style="left:269px;top:748px"></i><i class="f" style="left:304px;top:748px"></i><i class="f" style="left:338px;top:748px"></i><i class="f" style="left:373px;top:748px"></i>
<u class="gr" style="left:271px;top:634px;font-size:2.4px">Тема записи</u><u class="gr" style="left:306px;top:634px;font-size:2.4px">Дата записи</u><u class="gr" style="left:340px;top:634px;font-size:2.4px">Тип записи</u><u class="gr" style="left:375px;top:634px;font-size:2.4px">Оператор</u><u class="gr" style="left:410px;top:634px;font-size:2.4px">Оператор</u>
<u class="gr" style="left:271px;top:644px;font-size:2.4px">Тема записи</u><u class="gr" style="left:306px;top:644px;font-size:2.4px">Дата записи</u><u class="gr" style="left:340px;top:644px;font-size:2.4px">Тип записи</u><u class="gr" style="left:375px;top:644px;font-size:2.4px">Оператор</u><u class="gr" style="left:410px;top:644px;font-size:2.4px">Оператор</u>
<u class="gr" style="left:271px;top:673px;font-size:2.4px">Тема записи</u><u class="gr" style="left:306px;top:673px;font-size:2.4px">Дата записи</u><u class="gr" style="left:340px;top:673px;font-size:2.4px">Тип записи</u><u class="gr" style="left:375px;top:673px;font-size:2.4px">Оператор</u><u class="gr" style="left:410px;top:673px;font-size:2.4px">Оператор</u>
<u class="gr" style="left:271px;top:742px;font-size:2.4px">Тема записи</u><u class="gr" style="left:306px;top:742px;font-size:2.4px">Дата записи</u><u class="gr" style="left:340px;top:742px;font-size:2.4px">Тип записи</u><u class="gr" style="left:375px;top:742px;font-size:2.4px">Оператор</u><u class="gr" style="left:410px;top:742px;font-size:2.4px">Оператор</u>
<i class="pal" style="left:448px;top:633px;width:4px;height:4px;border:.5px solid #b9d3fa"></i><i class="op" style="left:453px;top:633px;width:4px;height:4px"></i><i class="bb" style="left:459px;top:633px;width:23px;height:5px"></i>
<i class="pal" style="left:448px;top:643px;width:4px;height:4px;border:.5px solid #b9d3fa"></i><i class="op" style="left:453px;top:643px;width:4px;height:4px"></i><i class="bb" style="left:459px;top:643px;width:23px;height:5px"></i>
<i class="pal" style="left:448px;top:673px;width:4px;height:4px;border:.5px solid #b9d3fa"></i><i class="op" style="left:453px;top:673px;width:4px;height:4px"></i><i class="bb" style="left:459px;top:673px;width:23px;height:5px"></i>
<i class="pal" style="left:448px;top:742px;width:4px;height:4px;border:.5px solid #b9d3fa"></i><i class="op" style="left:453px;top:742px;width:4px;height:4px"></i><i class="bb" style="left:459px;top:741px;width:23px;height:5px"></i>
<i class="bb" style="left:268px;top:658px;width:5px;height:3px;border-radius:2px"></i><u style="left:274px;top:658px">Только мои записи</u>
<u class="bl" style="left:268px;top:663px">Фильтр по контрагенту</u><u class="bl" style="left:297px;top:663px">Контакты записи</u><u class="bl" style="left:320px;top:663px">Фильтр по обращению записи</u>
<i class="bb" style="left:268px;top:687px;width:5px;height:3px;border-radius:2px"></i><u style="left:274px;top:687px">Только мои записи</u>
<u class="bl" style="left:268px;top:692px">Фильтр по контрагенту</u><u class="bl" style="left:268px;top:705px">Фильтр по записи</u><u class="bl" style="left:268px;top:718px">Фильтр по обращению записи</u>
<i class="bb" style="left:268px;top:756px;width:5px;height:3px;border-radius:2px"></i><u style="left:274px;top:756px">Только мои записи</u>
<u class="bl" style="left:268px;top:761px">Фильтр по контрагенту</u><u class="bl" style="left:297px;top:761px">Контакты записи</u><u class="bl" style="left:320px;top:761px">Фильтр по обращению записи</u>
<i class="bb" style="left:269px;top:767px;width:2px;height:2px"></i><u style="left:272px;top:767px">Заявка 1</u><i class="re" style="left:288px;top:767px;width:2px;height:2px"></i><u style="left:291px;top:767px">Заявка 2</u><i style="left:306px;top:767px;width:2px;height:2px;background:#75d09b"></i><u style="left:309px;top:767px">Заявка 3</u><i style="left:326px;top:767px;width:2px;height:2px;background:#9a6ee0"></i><u style="left:329px;top:767px">Заявка Тип</u>
<u style="left:491px;top:634px">Активный</u><u style="left:491px;top:644px">Выбор</u><u style="left:491px;top:673px">Все показатели</u><u style="left:491px;top:741px">Все показатели</u><u style="left:491px;top:744px">Записи всех</u>
<!-- right column -->
<u class="k" style="left:593px;top:513px">Сохранённый фильтр</u><u class="gr" style="left:627px;top:513px;font-size:2.4px">Показатели записи в блоке фильтра</u><u class="gr" style="left:627px;top:516px;font-size:2.4px">Показатели записи</u>
<i class="dw" style="left:593px;top:521px;width:81px;height:46px"></i>
<i class="bb" style="left:600px;top:526px;width:3px;height:3px;border-radius:50%"></i><i class="bb" style="left:600px;top:538px;width:3px;height:3px;border-radius:50%"></i><i class="bb" style="left:600px;top:549px;width:3px;height:3px;border-radius:50%"></i>
<u style="left:604px;top:525px">Фильтр</u><u style="left:604px;top:538px">Фильтр</u><u style="left:604px;top:549px">Фильтр</u><u style="left:625px;top:525px">Активный</u><u style="left:625px;top:537px">Наведение</u><u style="left:625px;top:548px">Нажатие и удаление</u>
<i class="pal" style="left:608px;top:531px;width:26px;height:6px"></i><u style="left:609px;top:531px;font-size:2.2px">Показатели записи блока</u>
<i style="left:607px;top:540px;width:4px;height:5px;background:#888;border-radius:2px"></i><i style="left:614px;top:551px;width:4px;height:5px;background:#888;border-radius:2px"></i>
<i class="bb" style="left:600px;top:561px;width:3px;height:3px;border-radius:50%"></i><i class="re" style="left:604px;top:561px;width:3px;height:3px;border-radius:50%"></i><i style="left:608px;top:561px;width:3px;height:3px;border-radius:50%;background:#75d09b"></i><i style="left:612px;top:561px;width:3px;height:3px;border-radius:50%;background:#9a6ee0"></i><i class="bl2" style="left:616px;top:561px;width:3px;height:3px;border-radius:50%"></i>
<u class="k" style="left:593px;top:583px">Обозначения для графика</u>
<i class="dw" style="left:593px;top:591px;width:81px;height:20px"></i>
<i class="bl2" style="left:597px;top:596px;width:2px;height:2px"></i><u style="left:599px;top:595px;font-size:2.4px">По контрагентам</u><i class="re" style="left:615px;top:596px;width:2px;height:2px"></i><u style="left:617px;top:595px;font-size:2.4px">ММБ Мониторинг</u><i style="left:635px;top:596px;width:2px;height:2px;background:#75d09b"></i><u style="left:637px;top:595px;font-size:2.4px">Ресурсы</u><i class="bl2" style="left:597px;top:603px;width:2px;height:2px"></i><u style="left:599px;top:602px;font-size:2.4px">По контрагентам</u>
<u class="k" style="left:593px;top:624px">Дашборд</u>
<i class="w" style="left:593px;top:633px;width:106px;height:43px"></i><i class="w" style="left:593px;top:684px;width:106px;height:43px"></i>
<u class="k" style="left:596px;top:635px">Динамика средней группы</u><u class="bl" style="left:660px;top:635px">Динамика записей</u>
<u class="k" style="left:596px;top:687px">Динамика распределения</u><u class="bl" style="left:660px;top:687px">Выбрать по группам</u>
<svg style="left:0;top:0" width="996" height="907" fill="none">
<defs><linearGradient id="gr" x1="0" y1="0" x2="0" y2="1"><stop offset="0" stop-color="#c9cff3"/><stop offset="1" stop-color="#f4f5fd"/></linearGradient></defs>
<path d="M602 652 618 657 633 653 648 663.500 664 660 679 654.500 694 651V667H602Z" fill="url(#gr)"/>
<path d="M602 652 618 657 633 653 648 663.500 664 660 679 654.500 694 651" stroke="#8fb6f5" stroke-width=".8"/>
<path d="M602 652.500h1M618 657h1M633 653h1M648 663.500h1M664 660h1M679 654.500h1M693 651h1" stroke="#7aaaf3" stroke-width="2.200"/>
<path d="M602 703 618 708 633 704 648 715 664 711 679 706 694 702V718H602Z" fill="url(#gr)"/>
<path d="M602 703 618 708 633 704 648 715 664 711 679 706 694 702" stroke="#8fb6f5" stroke-width=".8"/>
<path d="M602 703h1M618 708h1M633 704h1M648 715h1M664 711h1M679 706h1M693 702h1" stroke="#7aaaf3" stroke-width="2.200"/>
<rect x="634" y="706" width="2" height="3" fill="#333"/>
</svg>
<u class="gr" style="left:596px;top:644px;font-size:2.2px">100%</u><u class="gr" style="left:596px;top:649px;font-size:2.2px">80%</u><u class="gr" style="left:596px;top:654px;font-size:2.2px">60%</u><u class="gr" style="left:596px;top:660px;font-size:2.2px">40%</u><u class="gr" style="left:596px;top:665px;font-size:2.2px">0%</u>
<u class="gr" style="left:596px;top:695px;font-size:2.2px">100%</u><u class="gr" style="left:596px;top:700px;font-size:2.2px">75%</u><u class="gr" style="left:596px;top:705px;font-size:2.2px">50%</u><u class="gr" style="left:596px;top:711px;font-size:2.2px">25%</u><u class="gr" style="left:596px;top:716px;font-size:2.2px">0%</u>
<u style="left:599px;top:669px;font-size:2.4px;word-spacing:7px">01.01.21 02.01.21 03.01.21 04.01.21 05.01.21 06.01.21 07.01.21</u>
<u style="left:599px;top:721px;font-size:2.4px;word-spacing:7px">01.01.21 02.01.21 03.01.21 04.01.21 05.01.21 06.01.21 07.01.21</u>
<i class="pal" style="left:635px;top:700px;width:24px;height:5px"></i><u style="left:636px;top:700px;font-size:2.4px">Активность группы 76%</u>

<!-- ПОЛЯ ВВОДА -->
<i class="pn" style="left:760px;top:506px;width:206px;height:375px"></i>
<u class="k" style="left:766px;top:512px">Ввод текста</u><u class="k" style="left:853px;top:512px">Выбор варианта</u>
<i class="dw" style="left:766px;top:520px;width:81px;height:58px"></i><i class="dw" style="left:853px;top:520px;width:81px;height:58px"></i>
<i class="op" style="left:769px;top:523px;width:32px;height:5px"></i><i class="op" style="left:769px;top:532px;width:32px;height:5px"></i><i class="op" style="left:769px;top:540px;width:32px;height:5px"></i><i class="op" style="left:769px;top:549px;width:32px;height:5px"></i>
<u class="gr" style="left:771px;top:524px;font-size:2.4px">Ввод текста</u><u style="left:771px;top:533px;font-size:2.4px">Текст</u><u class="gr" style="left:771px;top:541px;font-size:2.4px">Ввод текста</u><u class="gr" style="left:771px;top:550px;font-size:2.4px">Ввод текста</u><u class="rd" style="left:769px;top:552px;font-size:2.4px">Ошибка</u>
<u style="left:827px;top:525px">Неактивное</u><u style="left:827px;top:532px">Активное</u><u style="left:827px;top:540px">Выбор</u><u style="left:827px;top:549px">Ошибка</u>
<i class="op" style="left:858px;top:523px;width:34px;height:5px"></i><i class="op" style="left:858px;top:531px;width:34px;height:5px"></i><i class="op" style="left:858px;top:539px;width:31px;height:5px"></i>
<u class="gr" style="left:860px;top:524px;font-size:2.4px">Выбор значения</u><u style="left:860px;top:533px;font-size:2.4px">Текст</u><u class="gr" style="left:860px;top:540px;font-size:2.4px">Выбор значения</u>
<i class="w" style="left:858px;top:544px;width:34px;height:15px;box-shadow:0 0 2px rgba(80,90,120,.2)"></i>
<i class="pal" style="left:858px;top:549px;width:34px;height:4px"></i>
<u style="left:860px;top:545px;font-size:2.4px">Вариант один</u><u style="left:860px;top:550px;font-size:2.4px">Вариант два</u><u style="left:860px;top:554px;font-size:2.4px">Вариант три значения</u>
<i style="left:877px;top:549px;width:4px;height:5px;background:#888;border-radius:2px"></i>
<i style="left:858px;top:567px;width:34px;height:5px;background:#eef1f6"></i>
<u style="left:905px;top:525px">Неактивное</u><u style="left:905px;top:533px">Активное</u><u style="left:905px;top:542px">Выбор</u><u style="left:905px;top:558px;font-size:2.4px">Показатели записи</u><u style="left:905px;top:561px;font-size:2.4px">Показатели</u><u style="left:905px;top:569px">Неактивное</u>
<u class="k" style="left:766px;top:583px">Загрузка файлов</u><u class="k" style="left:853px;top:583px">Загрузка логотипа</u>
<i class="dw" style="left:766px;top:592px;width:81px;height:75px"></i><i class="dw" style="left:853px;top:592px;width:81px;height:75px"></i>
<i class="ph" style="left:770px;top:596px;width:15px;height:16px"></i><i class="ph" style="left:770px;top:644px;width:15px;height:16px"></i>
<i class="ph" style="left:857px;top:596px;width:15px;height:16px"></i><i class="ph" style="left:857px;top:644px;width:15px;height:16px"></i>
<i class="bl2" style="left:776px;top:603px;width:3px;height:3px;opacity:.7"></i><i class="bl2" style="left:776px;top:651px;width:3px;height:3px;opacity:.7"></i><i class="bl2" style="left:864px;top:603px;width:2px;height:3px;opacity:.7"></i><i class="bl2" style="left:864px;top:651px;width:2px;height:3px;opacity:.7"></i>
<svg style="left:770px;top:620px" width="15" height="15"><rect width="15" height="15" fill="#6f7478"/><rect y="0" width="15" height="5" fill="#a9b2b8"/><rect x="3" y="4" width="4" height="8" fill="#4a5056"/><rect x="9" y="8" width="3" height="3" fill="#e8e8e8"/><rect y="12" width="15" height="3" fill="#3d4248"/></svg>
<svg style="left:857px;top:620px" width="15" height="15"><rect width="15" height="15" fill="#cfc9bb"/><ellipse cx="7.500" cy="7" rx="4.200" ry="5" fill="#c99a7c"/><path d="M3.300 5.500Q7 1 11.700 5.500V3L7 1 3.300 3Z" fill="#2c2420"/><rect x="2" y="12" width="11" height="3" fill="#3a3a3a"/></svg>
<u style="left:788px;top:596px;font-size:2.4px">Показатели записи блока</u><u style="left:788px;top:599px;font-size:2.4px">Показатели записи</u><u class="gr" style="left:788px;top:602px;font-size:2.4px">Показатели записи блока</u>
<u style="left:788px;top:620px;font-size:2.4px">Показатели записи блока</u><u style="left:788px;top:623px;font-size:2.4px">Показатели записи</u><u class="gr" style="left:788px;top:626px;font-size:2.4px">Показатели записи блока</u>
<u style="left:788px;top:644px;font-size:2.4px">Показатели записи блока</u><u style="left:788px;top:647px;font-size:2.4px">Показатели записи</u><u class="rd" style="left:788px;top:650px;font-size:2.4px">Показатели записи блока</u>
<u style="left:876px;top:596px;font-size:2.4px">Показатели записи блока</u><u style="left:876px;top:599px;font-size:2.4px">Показатели записи</u><u class="gr" style="left:876px;top:602px;font-size:2.4px">Показатели записи блока</u>
<u style="left:876px;top:620px;font-size:2.4px">Показатели записи блока</u><u style="left:876px;top:623px;font-size:2.4px">Показатели записи</u><u class="gr" style="left:876px;top:626px;font-size:2.4px">Показатели записи блока</u>
<u style="left:876px;top:644px;font-size:2.4px">Показатели записи блока</u><u style="left:876px;top:647px;font-size:2.4px">Показатели записи</u><u class="rd" style="left:876px;top:650px;font-size:2.4px">Показатели записи блока</u>
<i class="bb" style="left:788px;top:606px;width:24px;height:5px"></i><i class="bb" style="left:788px;top:630px;width:24px;height:5px"></i><i class="bb" style="left:788px;top:655px;width:24px;height:5px"></i>
<i class="bb" style="left:876px;top:606px;width:24px;height:5px"></i><i class="bb" style="left:876px;top:630px;width:24px;height:5px"></i><i class="bb" style="left:876px;top:655px;width:24px;height:5px"></i>
<u style="left:793px;top:607px;color:#fff;font-size:2.4px">Выберите файл</u><u style="left:793px;top:631px;color:#fff;font-size:2.4px">Выберите файл</u><u style="left:793px;top:656px;color:#fff;font-size:2.4px">Выберите файл</u>
<u style="left:881px;top:607px;color:#fff;font-size:2.4px">Выберите файл</u><u style="left:881px;top:631px;color:#fff;font-size:2.4px">Выберите файл</u><u style="left:881px;top:656px;color:#fff;font-size:2.4px">Выберите файл</u>
<u style="left:827px;top:596px">Стандарт</u><u style="left:827px;top:620px">Показатель</u><u style="left:827px;top:644px">Ошибка</u><u style="left:914px;top:596px">Стандарт</u><u style="left:914px;top:620px">Показатель</u><u style="left:914px;top:644px">Ошибка</u>
<u class="k" style="left:766px;top:671px">Календарь</u>
<i class="dw" style="left:766px;top:679px;width:81px;height:93px"></i>
<i class="op" style="left:769px;top:684px;width:31px;height:4px"></i><i class="op" style="left:769px;top:692px;width:31px;height:5px"></i><i class="op" style="left:769px;top:732px;width:31px;height:5px"></i>
<i class="bl2" style="left:796px;top:685px;width:2px;height:2px"></i><i class="bl2" style="left:796px;top:693px;width:2px;height:2px"></i><i class="bl2" style="left:796px;top:733px;width:2px;height:2px"></i>
<i class="card" style="left:769px;top:698px;width:63px;height:33px"></i><i class="card" style="left:769px;top:738px;width:63px;height:33px"></i>
<i class="pal" style="left:770px;top:699px;width:61px;height:5px"></i><i class="pal" style="left:770px;top:739px;width:61px;height:5px"></i>
<u style="left:779px;top:700px;font-size:2.4px">Май 2021</u><u style="left:809px;top:700px;font-size:2.4px">Июнь 2021</u><u style="left:779px;top:740px;font-size:2.4px">Май 2021</u><u style="left:809px;top:740px;font-size:2.4px">Июнь 2021</u>
<svg style="left:0;top:0" width="996" height="907" fill="none">
<g stroke="#a7b0be" stroke-width="1.400" stroke-dasharray="2 2.200">
<path d="M771 705.500H801M802 705.500H829M771 709.500H801M802 709.500H829M771 713.500H801M802 713.500H829M771 717.500H801M802 717.500H829M771 721.500H801M802 721.500H829M771 725.500H790M802 725.500H826"/>
<path d="M771 746.500H801M802 746.500H829M771 750.500H801M802 750.500H829M771 754.500H801M802 754.500H829M771 758.500H801M802 758.500H829M771 762.500H801M802 762.500H829M771 767H784M802 767H824"/>
</g>
</svg>
<i class="bb" style="left:784px;top:762px;width:3px;height:4px"></i><i class="bb" style="left:811px;top:753px;width:3px;height:4px"></i>
</div>
</body></html>
